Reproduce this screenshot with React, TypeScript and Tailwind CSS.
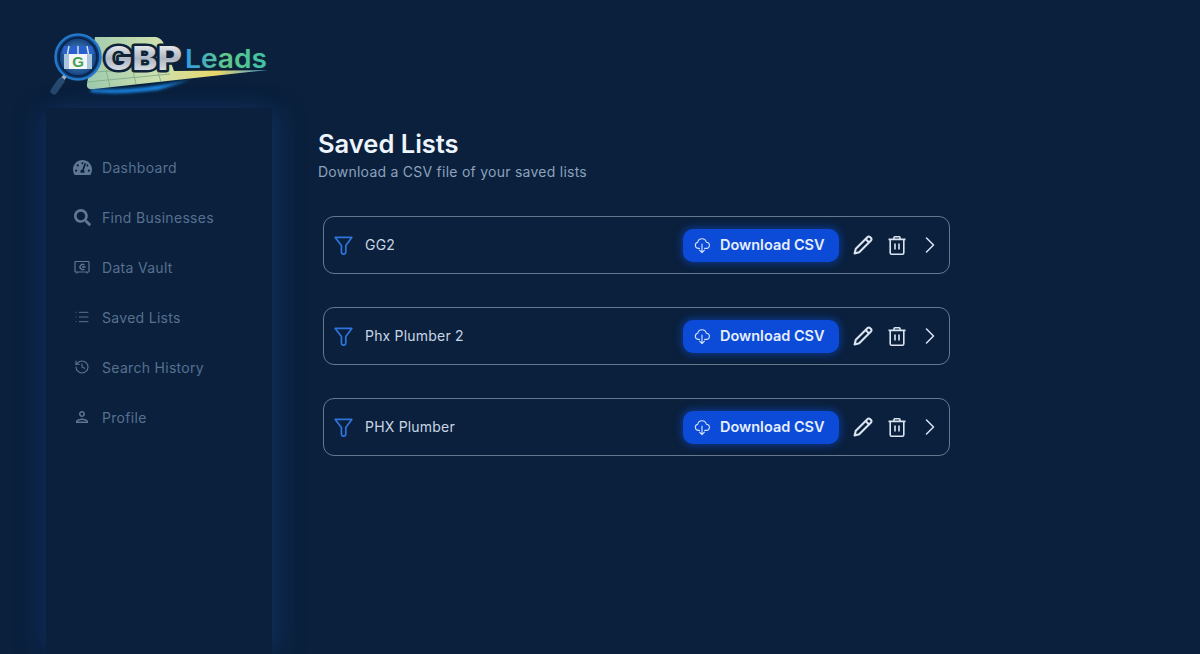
import { History, List } from "lucide-react";
import { FaSearch, FaTachometerAlt } from "react-icons/fa";
import { MdOutlinePerson } from "react-icons/md";

function VaultIcon() {
  return (
    <svg width="16" height="16" viewBox="0 0 16 16" fill="none" stroke="currentColor" strokeWidth="1.2">
      <rect x="1" y="2.5" width="14" height="10.5" rx="0.8" />
      <path d="M3 13v1.4M13 13v1.4" />
      <path d="M10.4 6.1a2.6 2.6 0 1 0 0 3.8M8 8h3.6" strokeWidth="1.3" />
    </svg>
  );
}

function CloudIcon() {
  return (
    <svg width="16" height="17" viewBox="0 0 16 17" fill="none" stroke="currentColor" strokeWidth="1.1" strokeLinecap="round" strokeLinejoin="round">
      <path d="M5.4 11.4H4.2a3.1 3.1 0 0 1-.5-6.1 4.4 4.4 0 0 1 8.6-.1 3.1 3.1 0 0 1 0 6.2h-1.6" />
      <path d="M8 7v8.6M5.6 13.2 8 15.6l2.4-2.4" />
    </svg>
  );
}

function FunnelIcon() {
  return (
    <svg width="19" height="19" viewBox="0 0 19 19" fill="none" stroke="#2f73dc" strokeWidth="1.7" strokeLinejoin="round" className="shrink-0">
      <path d="M1.2 1.4h16.6L11.8 9.6V16a2.2 2.2 0 0 1-4.4 0V9.6Z" />
    </svg>
  );
}

function PencilIcon() {
  return (
    <svg width="22" height="22" viewBox="0 0 22 22" fill="none" stroke="#dbe5f1" strokeWidth="2.1" strokeLinejoin="round" className="shrink-0 ml-[13px]">
      <path d="M2.6 19.4l1.2-4.6L15.6 3a1.6 1.6 0 0 1 2.3 0l1.1 1.1a1.6 1.6 0 0 1 0 2.3L7.2 18.2Z" />
      <path d="M13.6 5l3.4 3.4" />
    </svg>
  );
}

function TrashIcon() {
  return (
    <svg width="18" height="19" viewBox="0 0 18 19" fill="none" stroke="#dbe5f1" strokeWidth="1.6" strokeLinejoin="round" className="shrink-0 ml-[14px]">
      <path d="M0.5 3.4h17M6 3.2V1.6q0-.8.8-.8h4.4q.8 0 .8.8v1.6" />
      <path d="M2.2 3.4v13.4q0 1.4 1.4 1.4h10.8q1.4 0 1.4-1.4V3.4" />
      <path d="M7 7.6v6M11 7.6v6" />
    </svg>
  );
}

function Chevron() {
  return (
    <svg width="10" height="16" viewBox="0 0 10 16" fill="none" stroke="#dbe5f1" strokeWidth="1.5" strokeLinecap="round" strokeLinejoin="round" className="shrink-0 ml-[19px]">
      <path d="M1.5 1l7 7-7 7" />
    </svg>
  );
}

function Logo() {
  return (
    <svg width="240" height="90" viewBox="0 0 240 90" className="block">
      <defs>
        <linearGradient id="map" x1="0" y1="0" x2="1" y2="0">
          <stop offset="0" stopColor="#9fcbb0" />
          <stop offset="0.4" stopColor="#cfe0ad" />
          <stop offset="0.72" stopColor="#e9d768" />
          <stop offset="1" stopColor="#3f9fd0" />
        </linearGradient>
        <linearGradient id="gbp" x1="0" y1="0" x2="0" y2="1">
          <stop offset="0" stopColor="#ffffff" />
          <stop offset="0.5" stopColor="#aeb6c2" />
          <stop offset="1" stopColor="#f2f5f8" />
        </linearGradient>
        <linearGradient id="leads" x1="0" y1="0" x2="1" y2="0">
          <stop offset="0" stopColor="#2f9be8" />
          <stop offset="0.5" stopColor="#63c98a" />
          <stop offset="1" stopColor="#3dbfa8" />
        </linearGradient>
        <radialGradient id="store" cx="0.5" cy="0.5" r="0.5">
          <stop offset="0" stopColor="#5aa5e0" />
          <stop offset="1" stopColor="#123f7c" />
        </radialGradient>
        <filter id="soft" x="-20%" y="-50%" width="140%" height="200%">
          <feGaussianBlur stdDeviation="1.4" />
        </filter>
      </defs>
      <path d="M52 69 Q90 72 150 60 L118 70 Q80 75 50 72 Z" fill="#1b8ff0" filter="url(#soft)" />
      <path d="M55 17 L116 17 Q122 18 125 26 L134 51 L228 50 L54 69 Q46 70 47 64 Z" fill="url(#map)" />
      <path d="M47 62 L130 54 M66 50 L70 67 M92 47 L96 64 M118 52 L121 62 M52 52 L72 51" stroke="#7fae8c" strokeWidth="0.9" fill="none" />
      <circle cx="38" cy="37" r="22.5" fill="#0c3a74" stroke="#2378c8" strokeWidth="2.5" />
      <circle cx="38" cy="37" r="19" fill="url(#store)" stroke="#0a2247" strokeWidth="1.5" />
      <path d="M24 26h28l2.5 8h-33z" fill="#2a62cc" />
      <path d="M29 26l-1.5 8M38 26v8M47 26l1.5 8" stroke="#dbe8f7" strokeWidth="1.4" />
      <path d="M24 34h28v15H24z" fill="#a9c6df" />
      <rect x="29" y="34" width="18" height="15" fill="#f4f6f8" />
      <text x="38" y="47" textAnchor="middle" fontSize="15" fontWeight="700" fill="#3fa34d" fontFamily="'Liberation Sans', sans-serif">G</text>
      <path d="M25 56 L18 65" stroke="#9bb0c5" strokeWidth="4" />
      <path d="M21 61 L14 71" stroke="#27496e" strokeWidth="7" strokeLinecap="round" />
      <text x="64" y="50" fontSize="32" fontWeight="800" fontFamily="Inter, sans-serif" fill="url(#gbp)" stroke="#0e2238" strokeWidth="5" strokeLinejoin="round" paintOrder="stroke" textLength="78" lengthAdjust="spacingAndGlyphs">GBP</text>
      <text x="145" y="48" fontSize="26" fontWeight="600" fontFamily="Inter, sans-serif" fill="url(#leads)" stroke="#0b2438" strokeWidth="2.5" strokeLinejoin="round" paintOrder="stroke" textLength="82" lengthAdjust="spacingAndGlyphs">Leads</text>
    </svg>
  );
}

const nav = [
  { label: "Dashboard", icon: <FaTachometerAlt size={19} /> },
  { label: "Find Businesses", icon: <FaSearch size={17} /> },
  { label: "Data Vault", icon: <VaultIcon /> },
  { label: "Saved Lists", icon: <List size={16} strokeWidth={1.4} /> },
  { label: "Search History", icon: <History size={16} strokeWidth={1.6} /> },
  { label: "Profile", icon: <MdOutlinePerson size={18} /> },
];

const lists = ["GG2", "Phx Plumber 2", "PHX Plumber"];

export default function App() {
  return (
    <div className="h-[654px] w-[1200px] overflow-hidden bg-[#0a203c] font-['Inter',sans-serif] flex flex-col">
      <header className="h-[108px] pl-[40px] pt-[20px] shrink-0">
        <Logo />
      </header>
      <div className="flex flex-1 min-h-0">
        <aside className="ml-[46px] w-[226px] shrink-0 pt-[47px] pl-[26px] bg-[#0a203c] shadow-[-10px_0_22px_-2px_rgba(24,56,120,0.4),12px_0_22px_-2px_rgba(24,66,120,0.4)]">
          <nav className="flex flex-col gap-[26px]">
            {nav.map((n) => (
              <div key={n.label} className="flex items-center h-[24px]">
                <span className="w-[20px] flex justify-center text-[#5f7793]">{n.icon}</span>
                <span className="ml-[10px] text-[14px] tracking-[0.3px] text-[#587090]">{n.label}</span>
              </div>
            ))}
          </nav>
        </aside>
        <main className="ml-[46px] flex-1 pt-[20px]">
          <h1 className="text-[25.5px] leading-[32px] font-semibold text-[#eef4fb]">Saved Lists</h1>
          <p className="text-[14px] leading-[20px] mt-[2px] tracking-[0.25px] text-[#8ca2bd]">Download a CSV file of your saved lists</p>
          <div className="mt-[34px] ml-[5px] w-[627px] flex flex-col gap-[33px]">
            {lists.map((name) => (
              <div key={name} className="h-[58px] rounded-[11px] border border-[#64798f] flex items-center pl-[10px]">
                <FunnelIcon />
                <span className="ml-[12px] pb-[1px] text-[14px] tracking-[0.2px] text-[#c9d6e5]">{name}</span>
                <button className="ml-auto h-[33px] w-[156px] rounded-[10px] bg-[#0c4ad8] shadow-[0_0_7px_2px_rgba(16,75,215,0.5)] flex items-center pl-[11px] text-[#d8e6fa]">
                  <CloudIcon />
                  <span className="ml-[10px] text-[14.5px] font-semibold text-[#e6effc]">Download CSV</span>
                </button>
                <PencilIcon />
                <TrashIcon />
                <Chevron />
                <span className="w-[14px] shrink-0" />
              </div>
            ))}
          </div>
        </main>
      </div>
    </div>
  );
}
